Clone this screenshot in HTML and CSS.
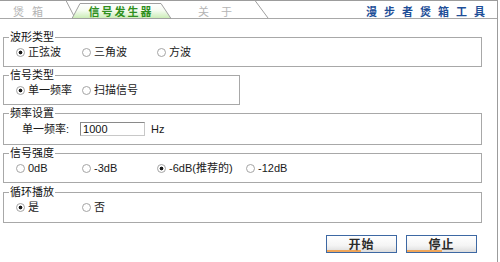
FILE: index.html
```html
<!DOCTYPE html>
<html lang="zh-CN">
<head>
  <meta charset="UTF-8" />
  <title>漫步者煲箱工具</title>
  <link rel="stylesheet" href="styles.css">
</head>
<body>
  <div class="frame">
    <div class="tabbar">
      <svg class="tabshape" width="497" height="19" viewBox="0 0 497 19">
        <defs>
          <linearGradient id="tabOn" x1="0" y1="0" x2="0" y2="1">
            <stop offset="0" stop-color="#ffffff"/>
            <stop offset="0.45" stop-color="#f6fcf2"/>
            <stop offset="1" stop-color="#c9ecb4"/>
          </linearGradient>
        </defs>
        <path d="M0 0.5H497" stroke="#9c9c9c" fill="none"/>
        <path d="M0 18.5H497" stroke="#a8a8a8" fill="none"/>
        <path d="M66 0.5L75 18" stroke="#a0a0a0" fill="none"/>
        <path d="M255 0.5L268 18" stroke="#a0a0a0" fill="none"/>
        <polygon points="72,18.5 80,3.5 161,3.5 171,18.5" fill="url(#tabOn)" stroke="#a0a0a0"/>
      </svg>
      <span class="tab tab-box">煲箱</span>
      <span class="tab tab-on">信号发生器</span>
      <span class="tab tab-about">关于</span>
      <span class="brand">漫步者煲箱工具</span>
    </div>

    <div class="panel">
      <fieldset class="group">
        <legend>波形类型</legend>
        <div class="opts">
          <label><input type="radio" name="wave" checked />正弦波</label>
          <label><input type="radio" name="wave" />三角波</label>
          <label><input type="radio" name="wave" />方波</label>
        </div>
      </fieldset>

      <fieldset class="group narrow">
        <legend>信号类型</legend>
        <div class="opts">
          <label><input type="radio" name="sig" checked />单一频率</label>
          <label><input type="radio" name="sig" />扫描信号</label>
        </div>
      </fieldset>

      <fieldset class="group">
        <legend>频率设置</legend>
        <div class="freq">
          <span>单一频率:</span>
          <input type="text" class="freq-input" value="1000" />
          <span class="unit">Hz</span>
        </div>
      </fieldset>

      <fieldset class="group">
        <legend>信号强度</legend>
        <div class="opts">
          <label><input type="radio" name="lvl" />0dB</label>
          <label><input type="radio" name="lvl" />-3dB</label>
          <label><input type="radio" name="lvl" checked />-6dB(推荐的)</label>
          <label><input type="radio" name="lvl" />-12dB</label>
        </div>
      </fieldset>

      <fieldset class="group last">
        <legend>循环播放</legend>
        <div class="opts">
          <label><input type="radio" name="loop" checked />是</label>
          <label><input type="radio" name="loop" />否</label>
        </div>
      </fieldset>

      <div class="actions">
        <button class="btn">开始</button>
        <button class="btn">停止</button>
      </div>
    </div>
  </div>
</body>
</html>
```

FILE: styles.css
```css
body {
  margin: 0;
  font: 11px/14px "Liberation Sans", "Noto Sans CJK SC", sans-serif;
  color: #1a1a1a;
  background: #fff;
}
.frame {
  width: 497px;
  height: 262px;
  border-right: 1px solid #9c9c9c;
}
.tabbar {
  position: relative;
  display: flex;
  height: 19px;
}
.tabshape {
  position: absolute;
  left: 0;
  top: 0;
}
.tab, .brand {
  position: relative;
  padding-top: 4px;
  line-height: 14px;
  text-align: center;
  font-family: "Noto Sans CJK SC", sans-serif;
}
.tab-box {
  width: 56px;
  color: #b4b4b4;
  letter-spacing: 8px;
  text-indent: 8px;
}
.tab-on {
  width: 128px;
  color: #2f8f1e;
  font-weight: bold;
  letter-spacing: 2px;
  text-indent: 2px;
}
.tab-about {
  width: 62px;
  color: #b4b4b4;
  letter-spacing: 12px;
  text-indent: 12px;
}
.brand {
  margin-left: auto;
  padding-right: 5px;
  color: #1f4f98;
  font-weight: bold;
  letter-spacing: 7px;
}
.panel {
  padding: 0 15px 0 3px;
}
.group {
  margin: 2px 0 0;
  padding: 2px 0 7px 12px;
  border: 1px solid #a8a8a8;
  min-width: 0;
}
.group:first-child {
  margin-top: 12px;
}
.group.last {
  margin-top: 3px;
  padding-bottom: 8px;
}
.group legend {
  margin-left: -7px;
  padding: 0 1px;
  line-height: 12px;
  color: #111;
}
.narrow {
  box-sizing: border-box;
  width: 237px;
}
.opts {
  display: grid;
  grid-template-columns: 66px 75px 89px auto;
  height: 14px;
}
.opts label {
  display: flex;
  align-items: center;
  white-space: nowrap;
}
.opts input {
  appearance: none;
  -webkit-appearance: none;
  width: 9px;
  height: 9px;
  margin: 0 3px 0 0;
  border: 1px solid #a4a4a4;
  border-radius: 50%;
  background: #fff;
  flex: none;
}
.opts input:checked {
  background: radial-gradient(circle, #1a1a1a 0 1.6px, #fff 2.2px);
}
.freq {
  display: flex;
  align-items: center;
  height: 16px;
  padding-left: 6px;
}
.freq-input {
  box-sizing: border-box;
  width: 65px;
  height: 14px;
  margin-left: 11px;
  padding: 0 2px;
  border: 1px solid #8a8a8a;
  border-right-color: #c8c8c8;
  border-bottom-color: #c8c8c8;
  font: 11px "Liberation Sans", sans-serif;
  color: #111;
}
.unit {
  margin-left: 6px;
}
.actions {
  display: flex;
  justify-content: flex-end;
  gap: 9px;
  margin-top: 12px;
  padding-right: 5px;
}
.btn {
  width: 71px;
  height: 18px;
  padding: 0;
  border: 1px solid #3d68a3;
  background:
    linear-gradient(to right, #f0a65a 50%, transparent 50%) bottom / 100% 2px no-repeat,
    linear-gradient(#ffffff, #f4f4f4 60%, #dcdcdc);
  font: bold 12px/16px "Noto Sans CJK SC", sans-serif;
  letter-spacing: 1px;
  color: #2a2a2a;
  cursor: pointer;
}
```
